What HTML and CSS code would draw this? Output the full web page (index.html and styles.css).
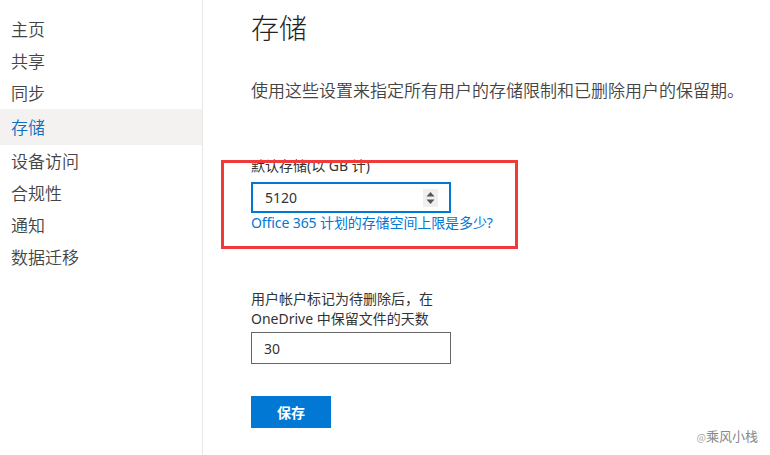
FILE: index.html
```html
<!DOCTYPE html>
<html lang="zh-CN">
<head>
<meta charset="utf-8">
<title>存储</title>
<link rel="stylesheet" href="styles.css">
</head>
<body>
<div class="page">
  <nav class="sidebar">
    <a class="nav-item">主页</a>
    <a class="nav-item">共享</a>
    <a class="nav-item">同步</a>
    <a class="nav-item active">存储</a>
    <a class="nav-item">设备访问</a>
    <a class="nav-item">合规性</a>
    <a class="nav-item">通知</a>
    <a class="nav-item">数据迁移</a>
  </nav>
  <main class="content">
    <h1 class="title">存储</h1>
    <p class="desc">使用这些设置来指定所有用户的存储限制和已删除用户的保留期。</p>

    <div class="field field-highlight">
      <label class="label">默认存储(以 GB 计)</label>
      <div class="textbox focused">
        <span class="value">5120</span>
        <span class="spinner">
          <svg width="15" height="18" viewBox="0 0 15 18"><path d="M3.5 7.5 L7.5 3 L11.5 7.5 Z" fill="#555"/><path d="M3.5 10.5 L7.5 15 L11.5 10.5 Z" fill="#555"/></svg>
        </span>
      </div>
      <a class="link">Office 365 计划的存储空间上限是多少?</a>
      <span class="annotation"></span>
    </div>

    <div class="field field-second">
      <label class="label">用户帐户标记为待删除后，在<br>OneDrive 中保留文件的天数</label>
      <div class="textbox plain">
        <span class="value">30</span>
      </div>
    </div>

    <button class="btn-primary">保存</button>
  </main>
  <span class="watermark"><span class="at">@</span>乘风小栈</span>
</div>
</body>
</html>
```
FILE: styles.css
```css
html, body {
  margin: 0;
  padding: 0;
  background: #fff;
}
body {
  font-family: "Segoe UI", "Noto Sans", "Noto Sans CJK SC", sans-serif;
  color: #333;
}
.page {
  position: relative;
  display: flex;
  width: 770px;
  height: 455px;
  overflow: hidden;
}
.sidebar {
  flex: none;
  border-right: 1px solid #e6e6e6;
  padding-top: 13px;
  display: flex;
  flex-direction: column;
  box-sizing: border-box;
  width: 203px;
}
.nav-item {
  display: block;
  height: 32px;
  line-height: 32px;
  padding-left: 11px;
  font-size: 17px;
  font-weight: 350;
  color: #444;
  font-family: "Noto Sans CJK SC", sans-serif;
}
.nav-item.active {
  height: 36px;
  line-height: 36px;
  background: #f3f2f1;
  color: #106ebe;
}
.content {
  flex: 1;
  padding-left: 48px;
  display: flex;
  flex-direction: column;
  align-items: flex-start;
}
.title {
  margin: 7px 0 0 0;
  font-size: 28px;
  line-height: 40px;
  font-weight: 200;
  color: #222;
  font-family: "Noto Sans CJK SC", sans-serif;
}
.desc {
  margin: 31px 0 0 0;
  font-size: 17px;
  line-height: 24px;
  font-weight: 350;
  color: #444;
  font-family: "Noto Sans CJK SC", sans-serif;
}
.field {
  display: flex;
  flex-direction: column;
  align-items: flex-start;
  width: 200px;
  position: relative;
}
.field-highlight {
  margin-top: 54px;
}
.field-second {
  margin-top: 56px;
}
.label {
  font-size: 14px;
  line-height: 20px;
  color: #333;
  white-space: nowrap;
}
.field-highlight .label {
  margin-bottom: 6px;
}
.field-second .label {
  margin-bottom: 3px;
}
.textbox {
  box-sizing: border-box;
  width: 200px;
  height: 32px;
  display: flex;
  align-items: center;
  padding-left: 12px;
  padding-right: 11px;
  font-size: 14px;
  color: #333;
  background: #fff;
}
.textbox.focused {
  border: 2px solid #0078d4;
  height: 31px;
}
.textbox.plain {
  border: 1px solid #666;
}
.value {
  flex: 1;
}
.spinner {
  width: 15px;
  height: 18px;
  background: #efefef;
  display: flex;
}
.link {
  font-size: 14px;
  line-height: 20px;
  color: #0078d4;
  white-space: nowrap;
  letter-spacing: -0.1px;
}
.annotation {
  position: absolute;
  left: -30px;
  top: 4px;
  right: -67px;
  bottom: -16px;
  border: 3px solid #f03a3a;
  pointer-events: none;
}
.btn-primary {
  margin-top: 32px;
  width: 80px;
  height: 32px;
  border: none;
  background: #0078d4;
  color: #fff;
  font-size: 14px;
  font-weight: 700;
  font-family: "Noto Sans CJK SC", sans-serif;
  padding: 0;
}
.watermark {
  position: absolute;
  right: 12px;
  bottom: 10px;
  font-size: 13px;
  color: #888;
  font-family: "Noto Sans CJK SC", sans-serif;
}
.watermark .at {
  font-size: 10px;
  color: #aaa;
}
```
